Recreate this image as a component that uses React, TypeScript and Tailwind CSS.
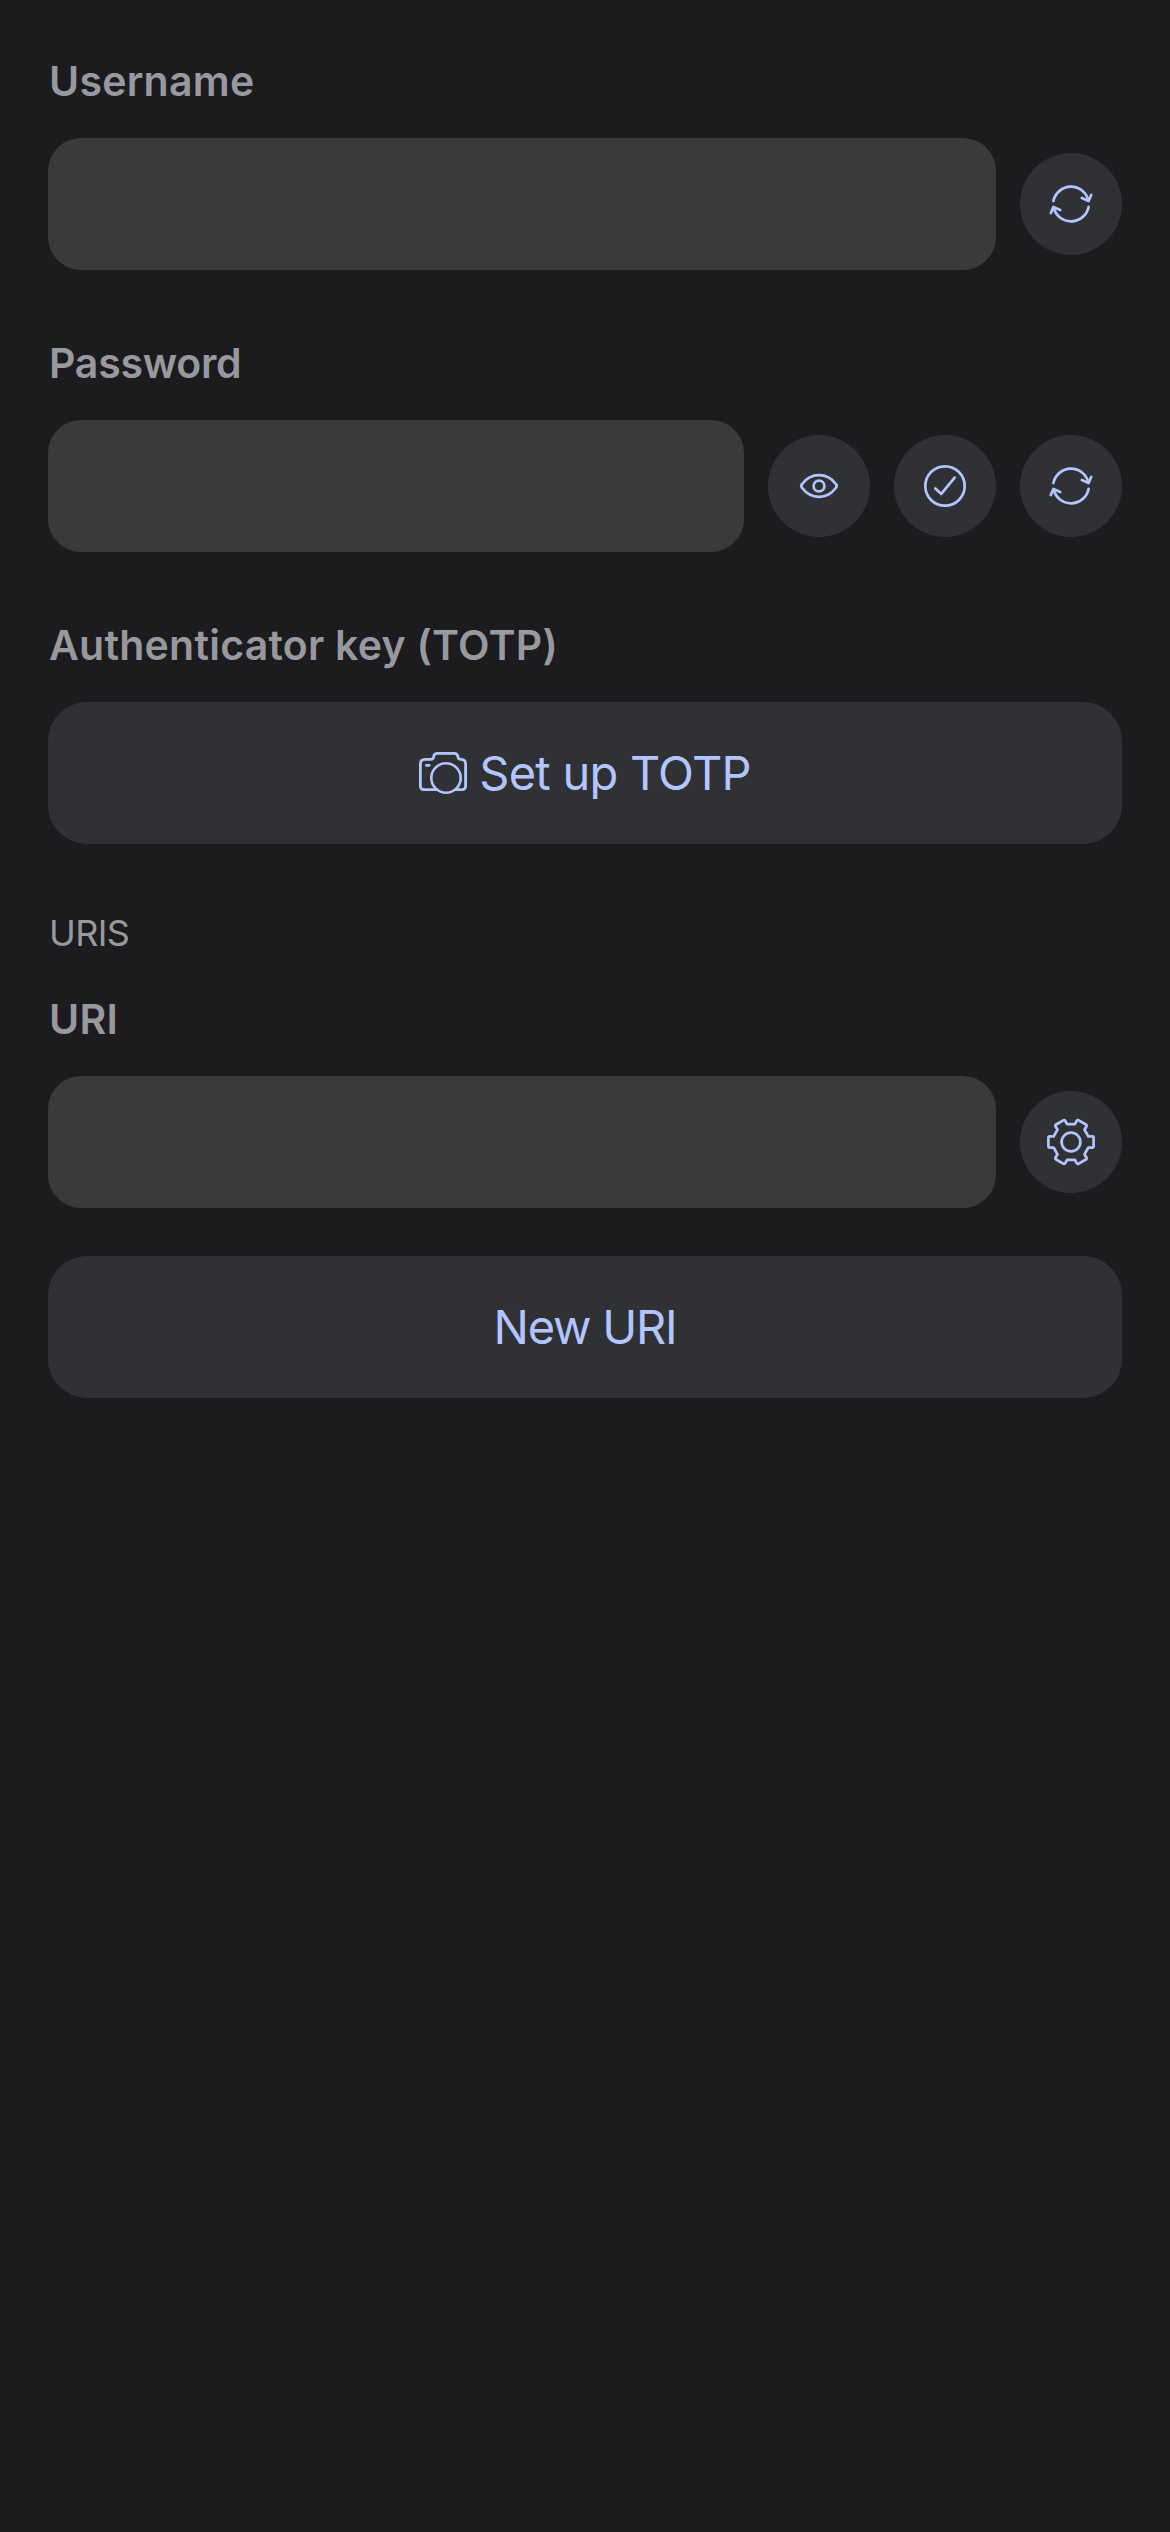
import type { ReactNode } from "react";

const ACCENT = "#b2c5ff";

function CircleButton({ label, children }: { label: string; children: ReactNode }) {
  return (
    <button aria-label={label} className="size-[102px] shrink-0 rounded-full bg-[#303135]">
      <svg
        viewBox="0 0 102 102"
        className="size-full"
        fill="none"
        stroke={ACCENT}
        strokeWidth="2.7"
        strokeLinecap="round"
        strokeLinejoin="round"
      >
        {children}
      </svg>
    </button>
  );
}

function GenerateButton() {
  return (
    <CircleButton label="Generate">
      <path d="M33.4 48.1A17.9 17.9 0 0 1 68.4 47.6" />
      <path d="M61.8 45L68.6 48L71.2 42" />
      <path d="M68.6 53.9A17.9 17.9 0 0 1 33.6 54.4" />
      <path d="M40.2 57L33.4 54L30.8 60" />
    </CircleButton>
  );
}

const TOOTH: [number, number][] = [
  [17.4, -5.5],
  [21.2, -5.6],
  [22.6, -5.6],
  [22.6, -4.1],
  [22.6, 4.1],
  [22.6, 5.6],
  [21.2, 5.6],
  [17.4, 5.5],
];

const gearPath =
  [0, 60, 120, 180, 240, 300]
    .map((deg, i) => {
      const a = (deg * Math.PI) / 180;
      const p = TOOTH.map(([x, y]) => {
        const px = 51 + x * Math.cos(a) - y * Math.sin(a);
        const py = 51 + x * Math.sin(a) + y * Math.cos(a);
        return `${px.toFixed(2)} ${py.toFixed(2)}`;
      });
      return `${i === 0 ? "M" : "L"}${p[0]}L${p[1]}Q${p[2]} ${p[3]}L${p[4]}Q${p[5]} ${p[6]}L${p[7]}`;
    })
    .join("") + "Z";

function CameraIcon() {
  return (
    <svg
      viewBox="0 0 48 42"
      className="h-[42px] w-12 shrink-0"
      fill="none"
      stroke={ACCENT}
      strokeWidth="2.8"
      strokeLinecap="round"
      strokeLinejoin="round"
    >
      <path
        strokeLinecap="butt"
        d="M18.4 37.7H5Q1.4 37.7 1.4 34.1V12Q1.4 7.4 6 7.4H11.6Q14.4 7.4 14.7 4.7Q15.1 1.4 18.4 1.4H35.2Q38.5 1.4 38.9 4.7Q39.2 7.4 42 7.4Q46.6 7.4 46.6 12V34.1Q46.6 37.7 43 37.7H35.6"
      />
      <circle cx="27" cy="26" r="14.7" strokeWidth="2.6" />
      <path d="M7.4 13.4H10.2" />
    </svg>
  );
}

function Label({ children, tight = false }: { children: ReactNode; tight?: boolean }) {
  return (
    <div
      className={`h-[60px] pl-px text-[41px] leading-[60px] font-semibold text-[#98989f] ${
        tight ? "tracking-[-0.25px]" : "tracking-[0.25px]"
      }`}
    >
      {children}
    </div>
  );
}

function Field({
  label,
  tight,
  children,
}: {
  label: string;
  tight?: boolean;
  children: ReactNode;
}) {
  return (
    <div className="flex flex-col gap-[27px]">
      <Label tight={tight}>{label}</Label>
      <div className="flex items-center gap-6">
        <input
          aria-label={label}
          className="h-[132px] min-w-0 flex-1 rounded-[33px] bg-[#3a3a3c] px-9 text-[48px] text-white outline-none"
        />
        {children}
      </div>
    </div>
  );
}

function WideButton({ children }: { children: ReactNode }) {
  return (
    <button className="flex h-[142px] w-full items-center justify-center gap-3 rounded-[39px] bg-[#303135] text-[47px] leading-none text-[#b2c5ff]">
      {children}
    </button>
  );
}

export default function App() {
  return (
    <main className="flex h-[2532px] w-[1170px] flex-col bg-[#1c1c1e] px-12 pt-[51px] font-[Inter,sans-serif]">
      <Field label="Username">
        <GenerateButton />
      </Field>

      <div className="mt-[63px]">
        <Field label="Password" tight>
          <CircleButton label="Show password">
            <path d="M34 49.2C38 43.8 44 40.2 51 40.2S64 43.8 68 49.2Q69.4 51 68 52.8C64 58.2 58 61.8 51 61.8S38 58.2 34 52.8Q32.6 51 34 49.2Z" />
            <circle cx="51" cy="51" r="5.4" />
          </CircleButton>
          <CircleButton label="Check password">
            <circle cx="51" cy="51" r="19.7" />
            <path d="M41.4 53.4L47.3 58.9L60.6 42.6" />
          </CircleButton>
          <GenerateButton />
        </Field>
      </div>

      <div className="mt-[63px] flex flex-col gap-[27px]">
        <Label>Authenticator key (TOTP)</Label>
        <WideButton>
          <CameraIcon />
          <span className="pb-[2px] tracking-[-0.75px]">Set up TOTP</span>
        </WideButton>
      </div>

      <h2 className="mt-[65px] h-12 pl-px text-[36px] leading-[48px] tracking-[-0.6px] text-[#98989f]">
        URIS
      </h2>

      <div className="mt-8">
        <Field label="URI">
          <CircleButton label="URI options">
            <path d={gearPath} />
            <circle cx="51" cy="51" r="9.4" />
          </CircleButton>
        </Field>
      </div>

      <div className="mt-12">
        <WideButton>
          <span className="pb-[2px] tracking-[-1.2px]">New URI</span>
        </WideButton>
      </div>
    </main>
  );
}
